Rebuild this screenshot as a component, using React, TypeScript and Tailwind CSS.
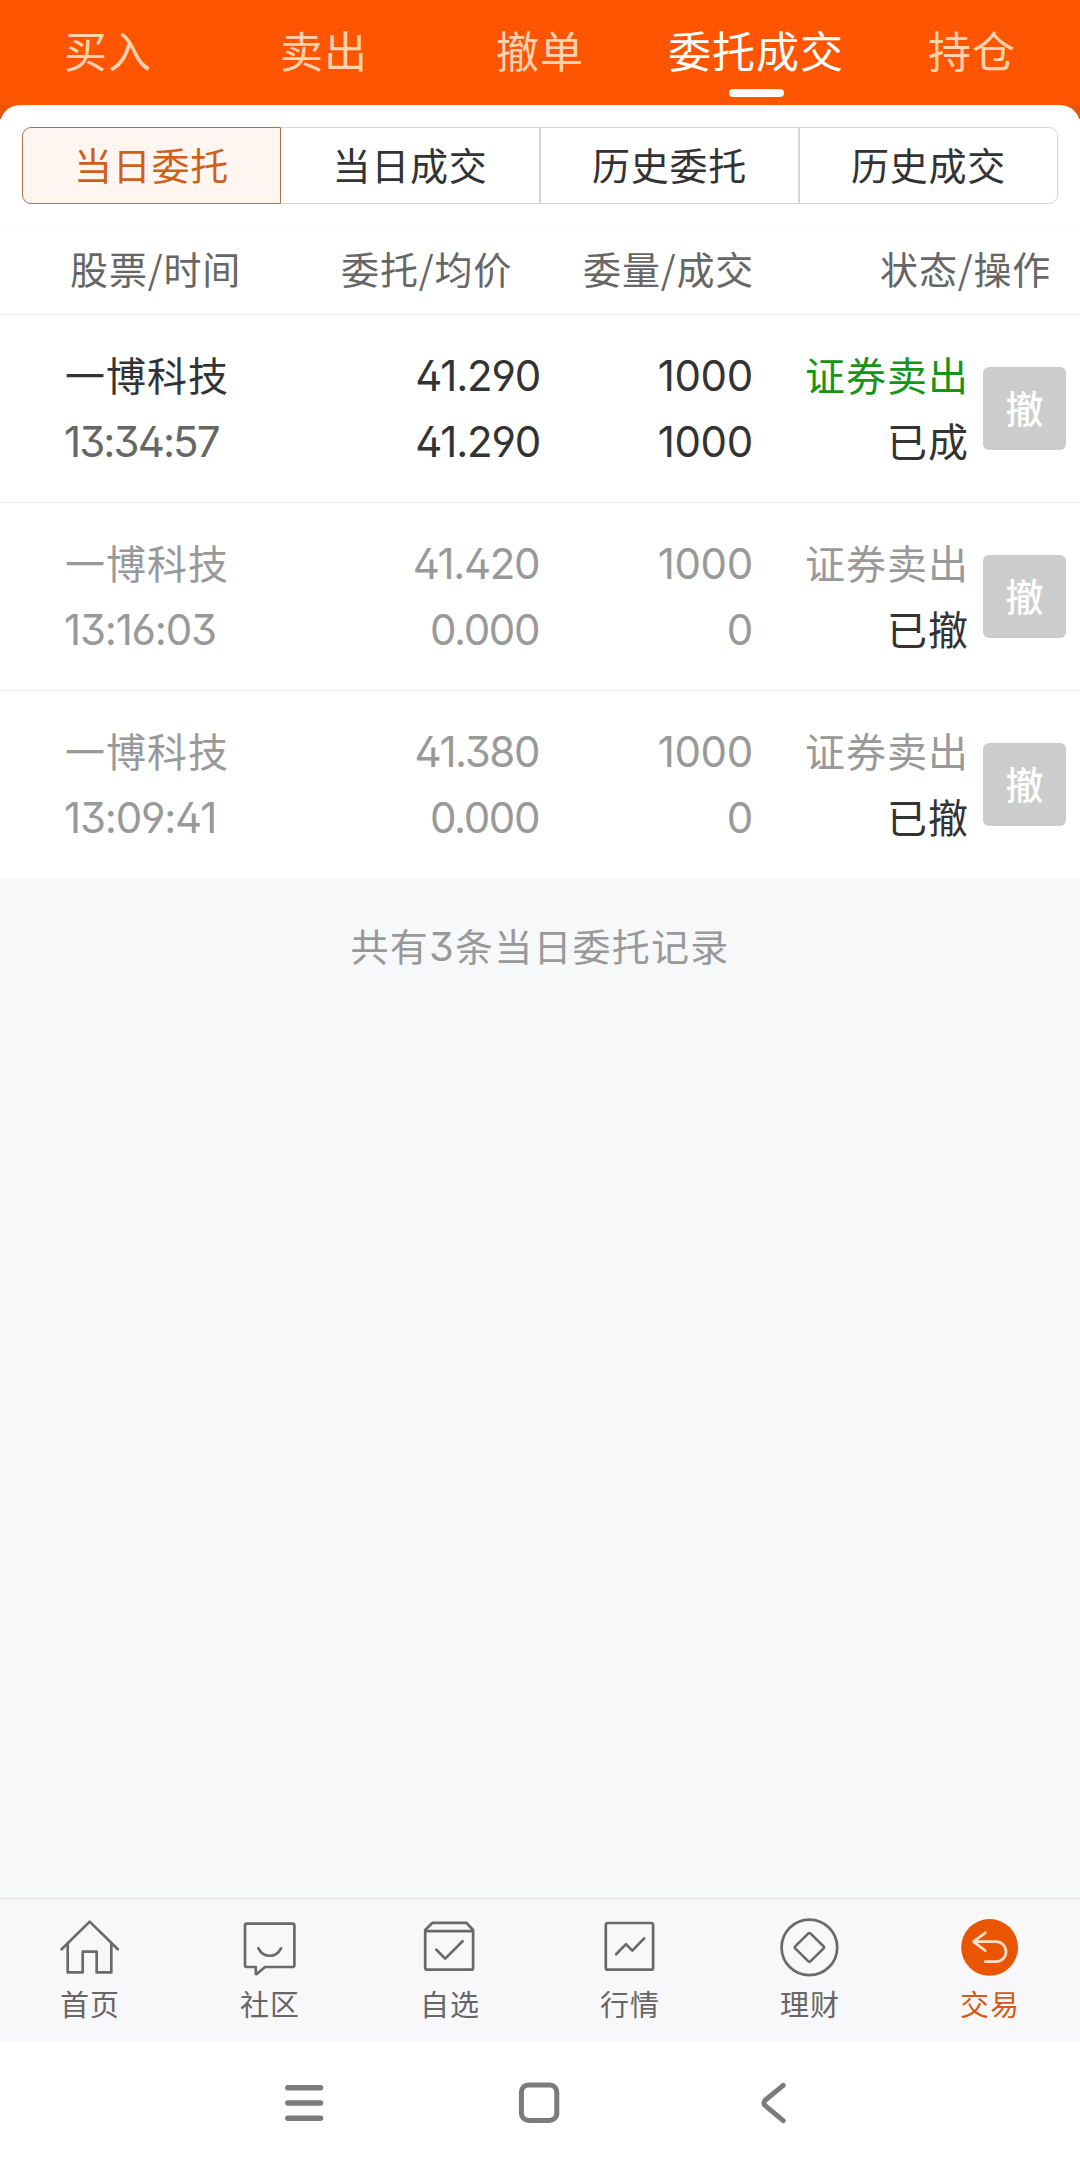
import { useState } from 'react';
import type { ReactNode } from 'react';
import clsx from 'clsx';

interface Order {
  id: number;
  name: string;
  time: string;
  price: string;
  avgPrice: string;
  amount: string;
  dealt: string;
  side: string;
  status: string;
  cancelled: boolean;
}

const topTabs = ['买入', '卖出', '撤单', '委托成交', '持仓'];
const subTabs = ['当日委托', '当日成交', '历史委托', '历史成交'];
const columns = ['股票/时间', '委托/均价', '委量/成交', '状态/操作'];

const orders: Order[] = [
  { id: 1, name: '一博科技', time: '13:34:57', price: '41.290', avgPrice: '41.290', amount: '1000', dealt: '1000', side: '证券卖出', status: '已成', cancelled: false },
  { id: 2, name: '一博科技', time: '13:16:03', price: '41.420', avgPrice: '0.000', amount: '1000', dealt: '0', side: '证券卖出', status: '已撤', cancelled: true },
  { id: 3, name: '一博科技', time: '13:09:41', price: '41.380', avgPrice: '0.000', amount: '1000', dealt: '0', side: '证券卖出', status: '已撤', cancelled: true },
];

const navItems: { label: string; icon: ReactNode }[] = [
  {
    label: '首页',
    icon: (
      <>
        <path d="M1.6 37.2 29.7 9.6 57.8 37.2" />
        <path d="M7.7 31.5V60.4H22.7V39.7H36.7V60.4H51.3V31.5" />
      </>
    ),
  },
  {
    label: '社区',
    icon: (
      <>
        <path d="M7 11.6H52.4a2 2 0 0 1 2 2V53a2 2 0 0 1-2 2H25L16.5 62.2 15.8 62V55H7a2 2 0 0 1-2-2V13.6a2 2 0 0 1 2-2Z" />
        <path d="M18.4 36.3C23.5 46.2 36 46.2 41 36.3" />
      </>
    ),
  },
  {
    label: '自选',
    icon: (
      <>
        <path d="M5.2 19.2H53.1V55.7a2 2 0 0 1-2 2H7.2a2 2 0 0 1-2-2V18L12.5 10.8H46.4L53.1 18V19.2" />
        <path d="M16.4 37.7 25.2 46.6 42.6 29.3" />
      </>
    ),
  },
  {
    label: '行情',
    icon: (
      <>
        <rect x="5.8" y="11" width="47.3" height="46.7" rx="2" />
        <path d="M16.1 42.2 26 32.1 32.3 38.6 44.2 26.4" />
      </>
    ),
  },
  {
    label: '理财',
    icon: (
      <>
        <circle cx="29.4" cy="35.4" r="27.8" />
        <path d="M28.4 21.4a1.4 1.4 0 0 1 2 0L43.6 34.4a1.4 1.4 0 0 1 0 2L30.4 49.4a1.4 1.4 0 0 1-2 0L15.2 36.4a1.4 1.4 0 0 1 0-2Z" />
      </>
    ),
  },
  {
    label: '交易',
    icon: (
      <>
        <circle cx="29.6" cy="35.4" r="28.4" fill="#ea5504" stroke="none" />
        <path d="M25.3 20.8 13.4 29.7 25.3 38.6M13.4 29.7H36a10 10 0 0 1 0 20H25.3" stroke="#ffe0c4" />
      </>
    ),
  },
];

export default function App() {
  const [activeTab, setActiveTab] = useState('委托成交');
  const [activeSub, setActiveSub] = useState('当日委托');

  return (
    <div className="flex h-[2172px] w-[1080px] flex-col overflow-hidden bg-[#f7f8fa] font-['Noto_Sans_CJK_SC',sans-serif] leading-none text-[#333333]">
      {/* Top tabs */}
      <header className="grid h-[105px] shrink-0 grid-cols-5 bg-[#ff5500]">
        {topTabs.map((t) => (
          <button
            key={t}
            onClick={() => setActiveTab(t)}
            className={clsx(
              'flex flex-col items-center pt-[18px] text-[43px] leading-[62px] tracking-[1px] whitespace-nowrap',
              t === activeTab ? 'text-white' : 'text-[#ffd2b0]'
            )}
          >
            {t}
            {t === activeTab && <span className="mt-[9px] h-2 w-[55px] shrink-0 rounded-full bg-[#fffaf2]" />}
          </button>
        ))}
      </header>

      {/* Order type switch */}
      <div className="h-[14px] shrink-0 overflow-hidden bg-[#ea5508]">
        <div className="h-8 rounded-t-[20px] bg-white" />
      </div>
      <div className="flex h-[107px] shrink-0 border-b border-[#f6f6f6] bg-white px-[22px] pt-2">
        {subTabs.map((t) => (
          <button
            key={t}
            onClick={() => setActiveSub(t)}
            className={clsx(
              'h-[77px] w-[259px] border pb-[4px] text-[38px] tracking-[0.8px] first:rounded-l-[9px] last:rounded-r-[9px]',
              t === activeSub
                ? 'border-[#b0704c] bg-[#fff6f2] text-[#cf5f1b]'
                : 'border-[#d6d6d6] [&:nth-child(2)]:border-l-0'
            )}
          >
            {t}
          </button>
        ))}
      </div>

      {/* Table head */}
      <div className="grid h-[89px] shrink-0 grid-cols-[241px_271px_242px_297px] items-center border-b border-[#ececec] bg-white pb-[4px] text-right text-[38px] tracking-[0.8px] text-[#666666]">
        {columns.map((c) => (
          <span key={c}>{c}</span>
        ))}
      </div>

      {/* Orders */}
      <div className="shrink-0 bg-white">
        {orders.map((o) => (
          <div
            key={o.id}
            className={clsx(
              'flex h-[188px] items-center border-b border-[#ececec] last:h-[187px] last:border-b-0',
              o.cancelled && 'text-[#999999]'
            )}
          >
            <div className="w-[270px] pl-[65px]">
              <p className="pb-[3px] text-[40px] leading-[63px] tracking-[1px]">{o.name}</p>
              <p
                className={clsx(
                  "-ml-px font-['Inter'] text-[42px] leading-[66px] [font-feature-settings:'ss01','cv09']",
                  o.cancelled ? 'tracking-[-1.2px]' : 'tracking-[-1.9px] text-[#666666]'
                )}
              >
                {o.time}
              </p>
            </div>
            <div
              className={clsx(
                "w-[270px] text-right font-['Inter'] text-[42px] leading-[66px] [font-feature-settings:'ss01','cv09']",
                o.cancelled ? 'pr-px tracking-[-1.4px]' : 'tracking-[-1.2px]'
              )}
            >
              <p>{o.price}</p>
              <p>{o.avgPrice}</p>
            </div>
            <div className="w-[213px] text-right font-['Inter'] text-[42px] leading-[66px] tracking-[-0.3px] [font-feature-settings:'ss01','cv09']">
              <p>{o.amount}</p>
              <p>{o.dealt}</p>
            </div>
            <div className="w-[216px] pb-[3px] text-right text-[40px] leading-[66px] tracking-[1px]">
              <p className={clsx(!o.cancelled && 'text-[#159415]')}>{o.side}</p>
              <p className="text-[#333333]">{o.status}</p>
            </div>
            <button className="ml-[14px] size-[83px] rounded-[6px] bg-[#cccccc] pb-1 text-[38px] font-medium text-white">撤</button>
          </div>
        ))}
      </div>

      <p className="mt-[47px] text-center text-[38px] leading-10 tracking-[1.2px] text-[#999999]">
        共有<span className="font-['Inter'] text-[40px] [font-feature-settings:'ss01','cv09']">3</span>条当日委托记录
      </p>

      {/* Bottom navigation */}
      <nav className="mt-auto grid h-[144px] shrink-0 grid-cols-6 border-t border-[#e3e4e6] bg-[#f8f8fa] pt-[13px]">
        {navItems.map((item) => (
          <button
            key={item.label}
            className="flex flex-col items-center text-[29px] leading-10 tracking-[1px] text-[#666666] last:text-[#d65a14]"
          >
            <svg width="60" height="66" viewBox="0 0 60 66" fill="none" stroke="#6a6a6a" strokeWidth="2.7" strokeLinecap="round" strokeLinejoin="round">
              {item.icon}
            </svg>
            <span className="mt-[5px]">{item.label}</span>
          </button>
        ))}
      </nav>

      {/* System keys */}
      <div className="flex h-[130px] shrink-0 items-start justify-between bg-white px-[280px] pt-[36px]">
        <svg width="50" height="50" viewBox="0 0 50 50" stroke="#7b7b7b" strokeWidth="5.4" strokeLinecap="round">
          <path d="M7.8 9.7H40.6M7.8 25H40.6M7.8 40.3H40.6" />
        </svg>
        <svg width="50" height="50" viewBox="0 0 50 50" fill="none" stroke="#7b7b7b" strokeWidth="5">
          <rect x="6.4" y="7" width="35.4" height="35.4" rx="7" />
        </svg>
        <svg width="50" height="50" viewBox="0 0 50 50" fill="none" stroke="#7b7b7b" strokeWidth="5" strokeLinecap="round">
          <path d="M33.2 7.4 15.8 21.8Q12 25 15.8 28.2L33.2 42.6" />
        </svg>
      </div>
    </div>
  );
}
